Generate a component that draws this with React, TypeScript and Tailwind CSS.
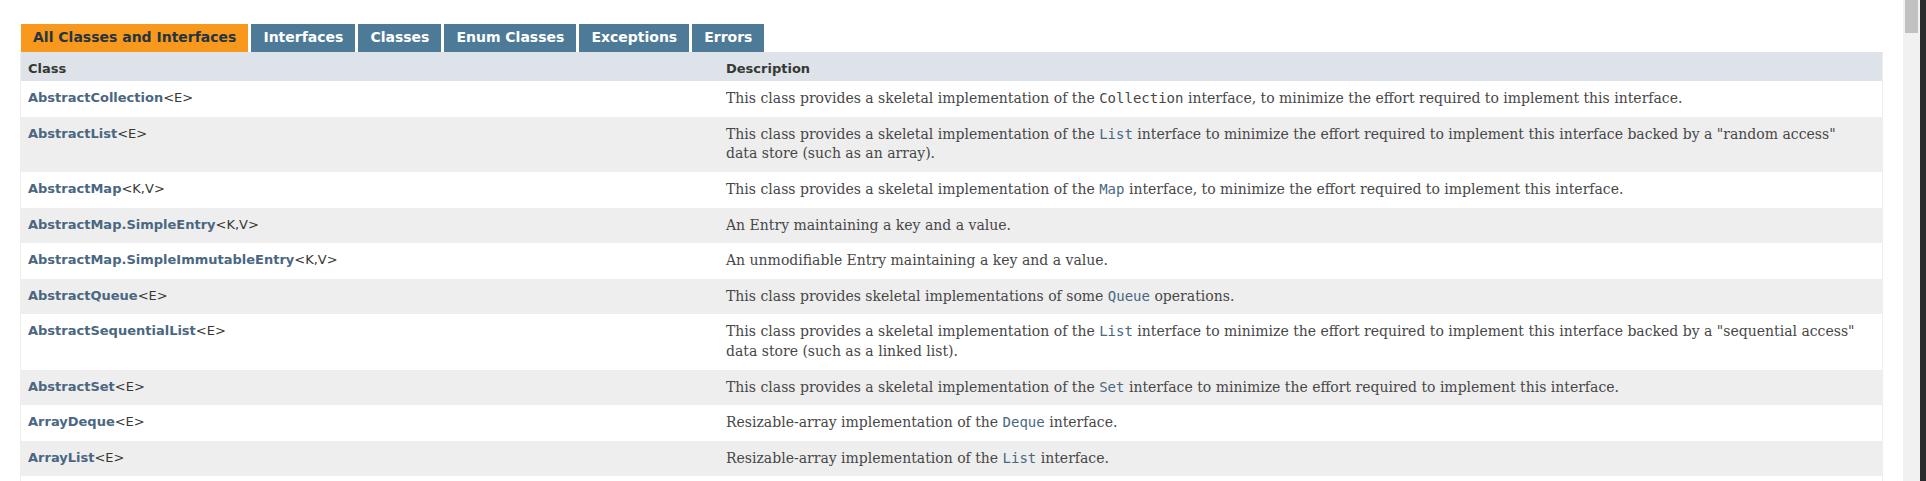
import React from 'react';

type Part = string | { code: string; link?: boolean };

type Row = {
  name: string;
  params: string;
  desc: Part[];
};

const tabs = ['All Classes and Interfaces', 'Interfaces', 'Classes', 'Enum Classes', 'Exceptions', 'Errors'];

const rows: Row[] = [
  {
    name: 'AbstractCollection',
    params: '<E>',
    desc: [
      'This class provides a skeletal implementation of the ',
      { code: 'Collection' },
      ' interface, to minimize the effort required to implement this interface.',
    ],
  },
  {
    name: 'AbstractList',
    params: '<E>',
    desc: [
      'This class provides a skeletal implementation of the ',
      { code: 'List', link: true },
      ' interface to minimize the effort required to implement this interface backed by a "random access" data store (such as an array).',
    ],
  },
  {
    name: 'AbstractMap',
    params: '<K,V>',
    desc: [
      'This class provides a skeletal implementation of the ',
      { code: 'Map', link: true },
      ' interface, to minimize the effort required to implement this interface.',
    ],
  },
  { name: 'AbstractMap.SimpleEntry', params: '<K,V>', desc: ['An Entry maintaining a key and a value.'] },
  { name: 'AbstractMap.SimpleImmutableEntry', params: '<K,V>', desc: ['An unmodifiable Entry maintaining a key and a value.'] },
  {
    name: 'AbstractQueue',
    params: '<E>',
    desc: ['This class provides skeletal implementations of some ', { code: 'Queue', link: true }, ' operations.'],
  },
  {
    name: 'AbstractSequentialList',
    params: '<E>',
    desc: [
      'This class provides a skeletal implementation of the ',
      { code: 'List', link: true },
      ' interface to minimize the effort required to implement this interface backed by a "sequential access" data store (such as a linked list).',
    ],
  },
  {
    name: 'AbstractSet',
    params: '<E>',
    desc: [
      'This class provides a skeletal implementation of the ',
      { code: 'Set', link: true },
      ' interface to minimize the effort required to implement this interface.',
    ],
  },
  {
    name: 'ArrayDeque',
    params: '<E>',
    desc: ['Resizable-array implementation of the ', { code: 'Deque', link: true }, ' interface.'],
  },
  {
    name: 'ArrayList',
    params: '<E>',
    desc: ['Resizable-array implementation of the ', { code: 'List', link: true }, ' interface.'],
  },
  {
    name: 'Arrays',
    params: '',
    desc: ['This class contains various methods for manipulating arrays (such as sorting and searching).'],
  },
];

const sans = "font-['DejaVu_Sans',Arial,sans-serif]";

export default function App() {
  return (
    <div className="flex h-[481px] overflow-hidden bg-white">
      <main className="min-w-0 flex-1 px-[20px] pt-[14px]">
        {/* tabs */}
        <div className={`flex gap-[3px] pl-[1px] pt-[10px] ${sans}`}>
          {tabs.map((t, i) => (
            <button
              key={t}
              className={`px-[12px] pt-[5px] pb-[7px] text-[14px] leading-[16px] font-bold ${
                i === 0 ? 'bg-[#f8981d] text-[#253441]' : 'bg-[#4d7a97] text-white'
              }`}
            >
              {t}
            </button>
          ))}
        </div>

        {/* summary table */}
        <div className="grid grid-cols-[698px_1fr] border-x border-[#eeeeee]">
          <div className={`bg-[#dee3e9] pt-[8px] pr-[3px] pb-[3px] pl-[7px] text-[13px] leading-[1.4] font-bold text-[#353833] ${sans}`}>
            Class
          </div>
          <div className={`bg-[#dee3e9] pt-[8px] pr-[3px] pb-[3px] pl-[7px] text-[13px] leading-[1.4] font-bold text-[#353833] ${sans}`}>
            Description
          </div>
          {rows.map((r, i) => {
            const bg = i % 2 === 0 ? 'bg-white' : 'bg-[#eeeeee]';
            return (
              <React.Fragment key={r.name}>
                <div className={`${bg} pt-[8px] pr-[3px] pb-[3px] pl-[7px] text-[13px] leading-[1.4] text-[#353833] ${sans}`}>
                  <span className="font-bold text-[#4a6782]">{r.name}</span>
                  {r.params}
                </div>
                <div className={`${bg} pt-[8px] pr-[3px] pb-[3px] pl-[7px]`}>
                  <div className="mr-[10px] mb-[5px] font-['DejaVu_Serif',Georgia,serif] text-[14px] leading-[1.4] text-[#474747]">
                    {r.desc.map((p, j) =>
                      typeof p === 'string' ? (
                        <React.Fragment key={j}>{p}</React.Fragment>
                      ) : (
                        <code
                          key={j}
                          className={`font-['DejaVu_Sans_Mono',monospace] text-[14px] ${
                            p.link ? 'text-[#4a6782]' : 'text-[#474747]'
                          }`}
                        >
                          {p.code}
                        </code>
                      )
                    )}
                  </div>
                </div>
              </React.Fragment>
            );
          })}
        </div>
      </main>

      {/* window scrollbar */}
      <div className="flex w-[17px] shrink-0 flex-col items-center bg-[#f1f1f1]">
        <div className="h-[33px] w-[13px] bg-[#c1c1c1]" />
      </div>
      <div className="w-[6px] shrink-0 bg-[#2b2b2d]" />
    </div>
  );
}
